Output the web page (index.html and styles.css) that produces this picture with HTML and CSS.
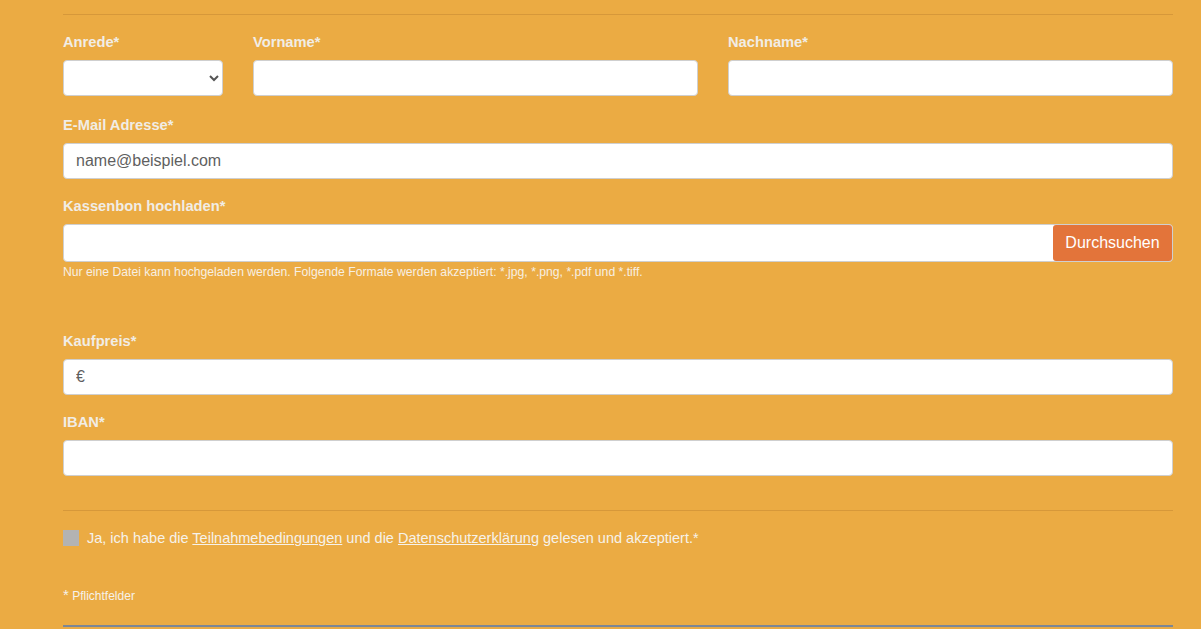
FILE: index.html
```html
<!DOCTYPE html>
<html>
<head>
  <meta charset="UTF-8">
  <title>Teilnahme</title>
  <link rel="stylesheet" href="styles.css">
</head>
<body>
  <div class="form-wrap">
    <hr class="trenner">

    <div class="reihe">
      <div class="feld feld-anrede">
        <label>Anrede*</label>
        <select class="eingabe">
          <option></option>
          <option>Frau</option>
          <option>Herr</option>
        </select>
      </div>
      <div class="feld feld-name">
        <label>Vorname*</label>
        <input class="eingabe" type="text">
      </div>
      <div class="feld feld-name">
        <label>Nachname*</label>
        <input class="eingabe" type="text">
      </div>
    </div>

    <div class="feld feld-mail">
      <label>E-Mail Adresse*</label>
      <input class="eingabe" type="text" placeholder="name@beispiel.com">
    </div>

    <div class="feld">
      <label>Kassenbon hochladen*</label>
      <div class="upload">
        <div class="upload-feld"></div>
        <button class="upload-button">Durchsuchen</button>
      </div>
      <p class="hinweis">Nur eine Datei kann hochgeladen werden. Folgende Formate werden akzeptiert: *.jpg, *.png, *.pdf und *.tiff.</p>
    </div>

    <div class="feld feld-preis">
      <label>Kaufpreis*</label>
      <input class="eingabe" type="text" placeholder="€">
    </div>

    <div class="feld">
      <label>IBAN*</label>
      <input class="eingabe" type="text">
    </div>

    <hr class="trenner trenner-unten">

    <div class="zustimmung">
      <span class="checkbox"></span>
      <span>Ja, ich habe die <a href="#">Teilnahmebedingungen</a> und die <a href="#">Datenschutzerklärung</a> gelesen und akzeptiert.*</span>
    </div>

    <p class="pflicht"><span class="stern">*</span> Pflichtfelder</p>

    <div class="abschluss"></div>
  </div>
</body>
</html>
```

FILE: styles.css
```css
body {
  margin: 0;
  background-color: #EBAB43;
  font-family: "Liberation Sans", Arial, sans-serif;
  color: #f3f1ec;
}

.form-wrap {
  width: 1110px;
  margin-left: 63px;
  padding-top: 14px;
}

.trenner {
  margin: 0;
  border: none;
  border-top: 1px solid #D6983A;
}

.reihe {
  display: flex;
  gap: 30px;
}

.feld {
  margin-top: 17px;
}

.feld-mail {
  margin-top: 19px;
}

.feld-anrede {
  width: 160px;
}

.feld-name {
  flex: 1;
}

.feld label {
  display: block;
  font-size: 14.7px;
  font-weight: bold;
  line-height: 20px;
  color: #f1ede6;
  margin-bottom: 8px;
}

.eingabe {
  display: block;
  box-sizing: border-box;
  width: 100%;
  height: 36px;
  margin: 0;
  padding: 0 12px;
  background-color: white;
  border: 1px solid #cfcfcf;
  border-radius: 4px;
  font-family: "Liberation Sans", Arial, sans-serif;
  font-size: 16px;
  color: #555;
}

.eingabe::placeholder {
  color: #5f5f5f;
}

select.eingabe {
  padding: 0 6px;
  color: #555;
}

.upload {
  display: flex;
  height: 38px;
  box-sizing: border-box;
  background-color: white;
  border: 1px solid #cfcfcf;
  border-radius: 4px;
}

.upload-feld {
  flex: 1;
}

.upload-button {
  width: 119px;
  margin: 0;
  padding: 0;
  background-color: #E3743A;
  color: white;
  border: none;
  border-radius: 3px;
  font-family: "Liberation Sans", Arial, sans-serif;
  font-size: 16px;
  cursor: pointer;
}

.hinweis {
  margin: 3px 0 0 0;
  font-size: 12.2px;
  line-height: 14px;
  color: #f7efe2;
}

.feld-preis {
  margin-top: 52px;
}

.trenner-unten {
  margin-top: 34px;
}

.zustimmung {
  display: flex;
  align-items: center;
  gap: 8px;
  margin-top: 18px;
  font-size: 14.5px;
  line-height: 18px;
  color: #f6f2ea;
}

.checkbox {
  width: 16px;
  height: 16px;
  background-color: #b3b3b3;
}

.zustimmung a {
  color: #f6f2ea;
}

.pflicht {
  margin: 40px 0 0 0;
  font-size: 12px;
  line-height: 16px;
  color: #f6f2ea;
}

.stern {
  font-size: 15px;
}

.abschluss {
  margin-top: 21px;
  border-top: 2px solid #7c8796;
}
```
